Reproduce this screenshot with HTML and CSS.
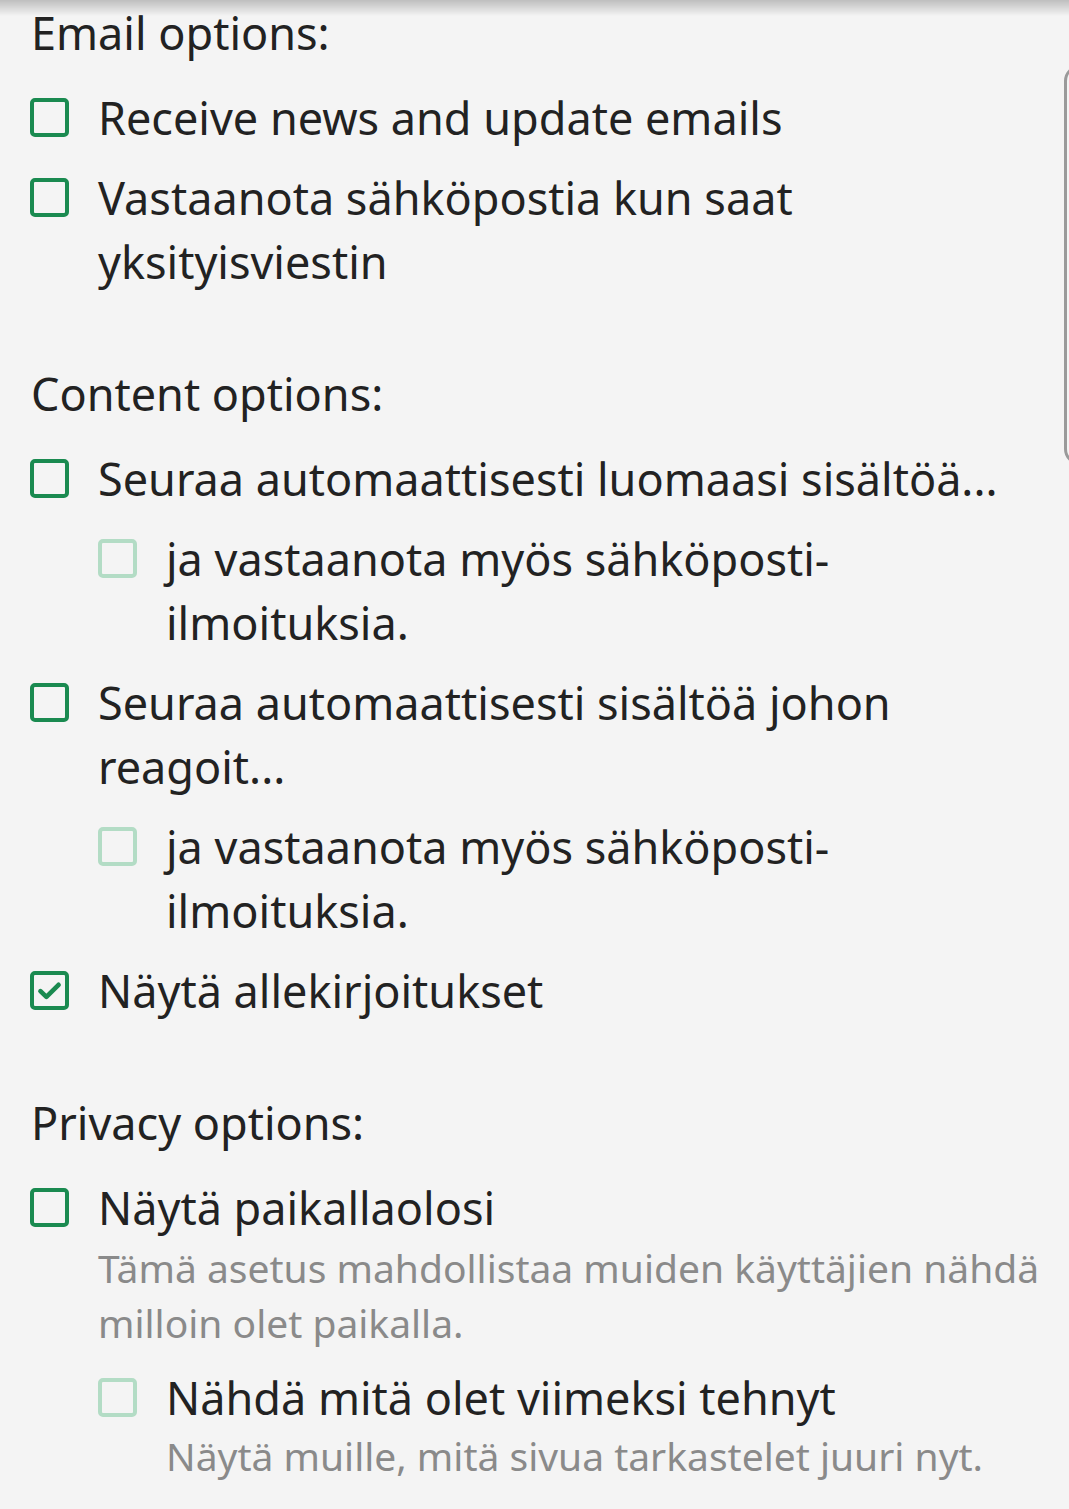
FILE: index.html
```html
<!DOCTYPE html>
<html lang="en">
<head>
    <meta charset="UTF-8">
    <meta name="viewport" content="width=device-width, initial-scale=1.0">
    <title>Preferences</title>
    <link rel="stylesheet" href="styles.css">
</head>
<body>
    <div class="topShadow"></div>
    <div class="sideFrame"></div>

    <div class="prefs">
        <section class="group">
            <h3 class="groupTitle">Email options:</h3>
            <label class="option">
                <span class="box"></span>
                <span class="label">Receive news and update emails</span>
            </label>
            <label class="option">
                <span class="box"></span>
                <span class="label">Vastaanota sähköpostia kun saat<br>yksityisviestin</span>
            </label>
        </section>

        <section class="group">
            <h3 class="groupTitle">Content options:</h3>
            <label class="option">
                <span class="box"></span>
                <span class="label">Seuraa automaattisesti luomaasi sisältöä...</span>
            </label>
            <label class="option sub">
                <span class="box disabled"></span>
                <span class="label">ja vastaanota myös sähköposti-<br>ilmoituksia.</span>
            </label>
            <label class="option">
                <span class="box"></span>
                <span class="label">Seuraa automaattisesti sisältöä johon<br>reagoit...</span>
            </label>
            <label class="option sub">
                <span class="box disabled"></span>
                <span class="label">ja vastaanota myös sähköposti-<br>ilmoituksia.</span>
            </label>
            <label class="option">
                <span class="box checked">
                    <svg viewBox="0 0 24 24" width="31" height="31"><path d="M5 12.5l4.6 4.4L19 7.6" fill="none" stroke="#1a8a50" stroke-width="3.6" stroke-linecap="round" stroke-linejoin="round"/></svg>
                </span>
                <span class="label">Näytä allekirjoitukset</span>
            </label>
        </section>

        <section class="group">
            <h3 class="groupTitle">Privacy options:</h3>
            <label class="option">
                <span class="box"></span>
                <span class="label">Näytä paikallaolosi</span>
                <span class="hint">Tämä asetus mahdollistaa muiden käyttäjien nähdä<br>milloin olet paikalla.</span>
            </label>
            <label class="option sub">
                <span class="box disabled"></span>
                <span class="label">Nähdä mitä olet viimeksi tehnyt</span>
                <span class="hint">Näytä muille, mitä sivua tarkastelet juuri nyt.</span>
            </label>
        </section>
    </div>
</body>
</html>
```

FILE: styles.css
```css
body {
    margin: 0;
    background: #f4f4f4;
    font-family: 'Noto Sans', 'Open Sans', sans-serif;
    color: #222222;
}

.topShadow {
    position: fixed;
    top: 0;
    left: 0;
    right: 0;
    height: 16px;
    background: linear-gradient(to bottom, rgba(0, 0, 0, 0.22), rgba(0, 0, 0, 0));
}

.sideFrame {
    position: absolute;
    top: 65px;
    left: 1064px;
    width: 40px;
    height: 400px;
    border: 3px solid #9a9a9a;
    border-radius: 16px;
    box-sizing: border-box;
}

.prefs {
    padding: 1px 0 0 30px;
}

.group {
    display: flex;
    flex-direction: column;
    gap: 16px;
    margin-bottom: 68px;
}

.groupTitle {
    margin: 0 0 5px 1px;
    font-size: 45px;
    font-weight: 400;
    line-height: 64px;
}

.option {
    display: grid;
    grid-template-columns: 39px 1fr;
    column-gap: 29px;
    align-items: start;
}

.option.sub {
    margin-left: 68px;
}

.box {
    width: 39px;
    height: 39px;
    margin-top: 12px;
    box-sizing: border-box;
    border: 4px solid #1a8a50;
    border-radius: 5px;
    display: flex;
    align-items: center;
    justify-content: center;
}

.box.disabled {
    border-color: #b3dcc5;
}

.label {
    font-size: 45px;
    line-height: 64px;
}

.hint {
    grid-column: 2;
    font-size: 39px;
    line-height: 55px;
    color: #8a8a8a;
}

.option.sub .hint {
    margin-top: -2px;
}
```
